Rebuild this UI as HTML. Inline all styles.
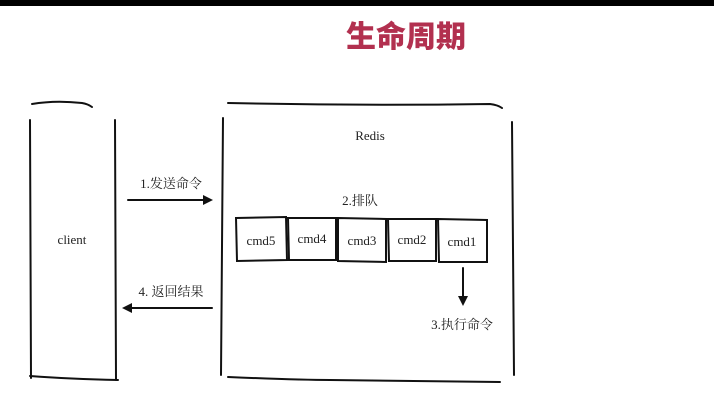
<!DOCTYPE html>
<html><head><meta charset="utf-8"><style>
html,body{margin:0;padding:0;background:#fff;width:714px;height:405px;overflow:hidden}
svg text{font-family:"Liberation Serif","Noto Serif CJK SC","Noto Sans CJK SC",serif;fill:#222}
</style></head><body>
<svg width="714" height="405" viewBox="0 0 714 405">
<rect x="0" y="0" width="714" height="6" fill="#000"/>
<text x="406" y="47" text-anchor="middle" style="font-family:'Noto Sans CJK SC',sans-serif;font-weight:900;font-size:30px;fill:#b2304f">生命周期</text>
<g stroke="#111" stroke-width="2" fill="none" stroke-linecap="round">
<path d="M32 104 Q55 100 82 103 Q88 104 92 107"/>
<path d="M30 120 L31 378"/>
<path d="M115 120 L116 380"/>
<path d="M30 376 Q70 379 118 380"/>
<path d="M228 103 Q360 106 490 104 Q498 105 502 108"/>
<path d="M223 118 L221 375"/>
<path d="M512 122 L514 375"/>
<path d="M228 377 Q300 380 330 380 L500 382"/>
<path d="M236 218 L286 217 L287 260 L237 261 Z"/>
<path d="M288 218 L336 218 L336 260 L289 260 Z"/>
<path d="M338 218 L386 219 L386 262 L338 261 Z"/>
<path d="M388 219 L436 219 L436 261 L389 261 Z"/>
<path d="M438 219 L487 220 L487 262 L439 262 Z"/>
<path d="M128 200 L205 200"/>
<path d="M130 308 L212 308"/>
<path d="M463 268 L463 297"/>
</g>
<g fill="#111">
<path d="M213 200 L203 195 L203 205 Z"/>
<path d="M122 308 L132 303 L132 313 Z"/>
<path d="M463 306 L458 296 L468 296 Z"/>
</g>
<g font-size="13">
<text x="370" y="140" text-anchor="middle">Redis</text>
<text x="72" y="244" text-anchor="middle">client</text>
<text x="171" y="188" text-anchor="middle">1.发送命令</text>
<text x="171" y="296" text-anchor="middle">4. 返回结果</text>
<text x="360" y="205" text-anchor="middle">2.排队</text>
<text x="462" y="329" text-anchor="middle">3.执行命令</text>
<text x="261" y="245" text-anchor="middle">cmd5</text>
<text x="312" y="243" text-anchor="middle">cmd4</text>
<text x="362" y="245" text-anchor="middle">cmd3</text>
<text x="412" y="244" text-anchor="middle">cmd2</text>
<text x="462" y="246" text-anchor="middle">cmd1</text>
</g>
</svg>
</body></html>
